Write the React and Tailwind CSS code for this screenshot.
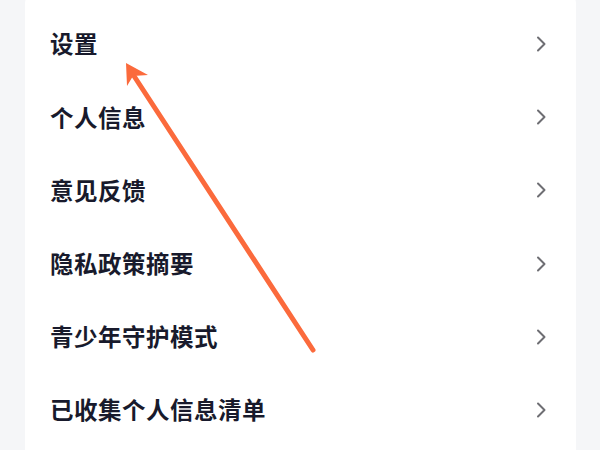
import React from "react";

const items = [
  "设置",
  "个人信息",
  "意见反馈",
  "隐私政策摘要",
  "青少年守护模式",
  "已收集个人信息清单",
];

function Chevron() {
  return (
    <svg width="12" height="18" viewBox="0 0 12 18" className="shrink-0">
      <path d="M3 2.5 L9.5 9 L3 15.5" fill="none" stroke="#6e6e73" strokeWidth="2" strokeLinecap="round" strokeLinejoin="round" />
    </svg>
  );
}

export default function App() {
  return (
    <div
      className="relative w-[600px] h-[450px] overflow-hidden bg-[#f5f6f8]"
      style={{ fontFamily: '"Noto Sans CJK SC", "Noto Sans", sans-serif' }}
    >
      <div className="ml-[25px] mr-[24px] -mt-[10px] h-[480px] bg-white rounded-[14px] pt-[17.5px] pl-[25px] pr-[29px]">
        {items.map((t) => (
          <div key={t} className="h-[73.2px] flex items-center justify-between">
            <span className="text-[23.5px] font-bold text-[#181a2c] tracking-[0.5px] leading-none">{t}</span>
            <Chevron />
          </div>
        ))}
      </div>
      <svg className="absolute left-0 top-0" width="600" height="450" viewBox="0 0 600 450">
        <line x1="313" y1="350" x2="134" y2="76" stroke="#fb6a3c" strokeWidth="5" strokeLinecap="round" />
        <polygon points="126,63 148,75 133,76 127,86" fill="#fb6a3c" />
      </svg>
    </div>
  );
}
